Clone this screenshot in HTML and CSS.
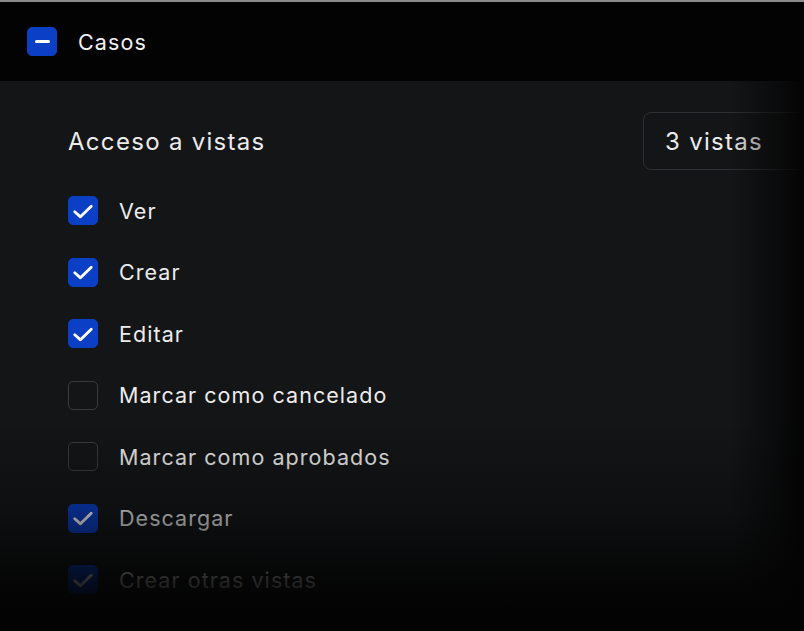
FILE: index.html
```html
<!DOCTYPE html>
<html lang="es">
<head>
    <meta charset="UTF-8">
    <meta name="viewport" content="width=device-width, initial-scale=1.0">
    <title>Casos</title>
    <link rel="stylesheet" href="styles.css">
</head>
<body>
    <header class="group-header">
        <span class="box box-on">
            <span class="dash"></span>
        </span>
        <span class="group-name">Casos</span>
    </header>

    <section class="panel">
        <div class="panel-top">
            <h2 class="panel-title">Acceso a vistas</h2>
            <div class="select">3 vistas</div>
        </div>

        <ul class="perm-list">
            <li class="perm">
                <span class="box box-on">
                    <svg viewBox="0 0 16 16"><path d="M2.5 8.5l3.8 3.4 7.2-7"/></svg>
                </span>
                Ver
            </li>
            <li class="perm">
                <span class="box box-on">
                    <svg viewBox="0 0 16 16"><path d="M2.5 8.5l3.8 3.4 7.2-7"/></svg>
                </span>
                Crear
            </li>
            <li class="perm">
                <span class="box box-on">
                    <svg viewBox="0 0 16 16"><path d="M2.5 8.5l3.8 3.4 7.2-7"/></svg>
                </span>
                Editar
            </li>
            <li class="perm">
                <span class="box"></span>
                Marcar como cancelado
            </li>
            <li class="perm">
                <span class="box"></span>
                Marcar como aprobados
            </li>
            <li class="perm">
                <span class="box box-on">
                    <svg viewBox="0 0 16 16"><path d="M2.5 8.5l3.8 3.4 7.2-7"/></svg>
                </span>
                Descargar
            </li>
            <li class="perm">
                <span class="box box-on">
                    <svg viewBox="0 0 16 16"><path d="M2.5 8.5l3.8 3.4 7.2-7"/></svg>
                </span>
                Crear otras vistas
            </li>
        </ul>
    </section>
</body>
</html>
```

FILE: styles.css
```css
body {
    margin: 0;
    height: 631px;
    overflow: hidden;
    font-family: Inter, "Noto Sans", sans-serif;
    background: #131517;
    color: #ececec;
    border-top: 2px solid #8a8a8a;
    box-sizing: border-box;
}

/* cabecera del grupo */
.group-header {
    display: flex;
    align-items: center;
    gap: 21px;
    height: 79px;
    padding-left: 27px;
    background: #030303;
}

.group-name {
    font-size: 21.5px;
    letter-spacing: 1.1px;
    color: #f2f2f2;
}

.box {
    flex: none;
    display: flex;
    align-items: center;
    justify-content: center;
    width: 30px;
    height: 29px;
    box-sizing: border-box;
    border: 1.5px solid #3a3b3d;
    border-radius: 5px;
}

.box-on {
    background: #0a3fc6;
    border-color: #0a3fc6;
}

.dash {
    width: 15px;
    height: 3px;
    border-radius: 2px;
    background: #fff;
}

.box svg {
    width: 24px;
    height: 24px;
    fill: none;
    stroke: #fff;
    stroke-width: 1.9;
    stroke-linecap: round;
    stroke-linejoin: round;
}

/* panel */
.panel {
    position: relative;
    height: 550px;
    padding: 31px 0 0 68px;
    box-sizing: border-box;
}

.panel::after {
    content: "";
    position: absolute;
    inset: 0;
    pointer-events: none;
    background:
        linear-gradient(to right, rgba(3, 3, 3, 0) 730px, rgba(3, 3, 3, 0.6) 780px, #030303 804px),
        linear-gradient(to bottom, rgba(3, 3, 3, 0) 340px, rgba(3, 3, 3, 0.35) 430px, rgba(3, 3, 3, 0.85) 500px, #030303 530px);
}

.panel-top {
    display: flex;
    align-items: center;
    justify-content: space-between;
    height: 58px;
    margin-bottom: 26px;
}

.panel-title {
    margin: 0;
    font-size: 24px;
    font-weight: 400;
    letter-spacing: 1.3px;
    color: #ececec;
}

.select {
    width: 200px;
    height: 58px;
    margin-right: -39px;
    box-sizing: border-box;
    padding-left: 21px;
    display: flex;
    align-items: center;
    border: 1.5px solid #2f3033;
    border-radius: 8px;
    background: #141517;
    font-size: 24px;
    letter-spacing: 1.3px;
    color: #ececec;
}

.perm-list {
    list-style: none;
    margin: 0;
    padding: 0;
    display: flex;
    flex-direction: column;
    gap: 32.5px;
}

.perm {
    display: flex;
    align-items: center;
    gap: 21px;
    height: 29px;
    font-size: 21.5px;
    letter-spacing: 1.05px;
}
```
